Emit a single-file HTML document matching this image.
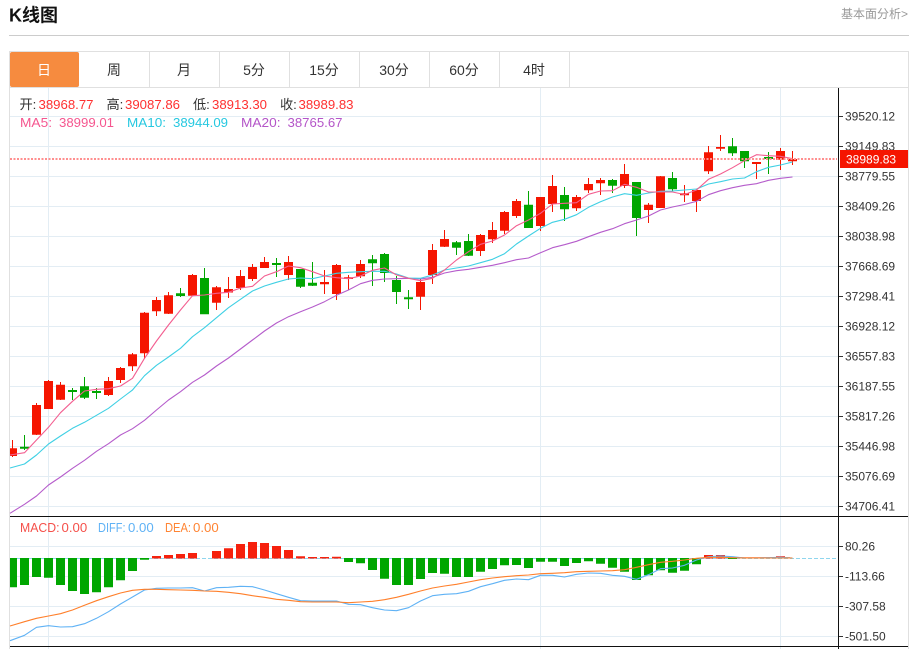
<!DOCTYPE html>
<html lang="zh">
<head>
<meta charset="utf-8">
<title>K线图</title>
<style>
html,body{margin:0;padding:0;background:#fff;width:917px;height:649px;overflow:hidden}
svg{display:block;position:absolute;left:0;top:0}
text{font-family:"Liberation Sans","Noto Sans CJK SC",sans-serif}
.ax{font-size:12px;fill:#333}
.tab{font-size:14px;fill:#333;text-anchor:middle}
.lg{font-size:13.2px}
</style>
</head>
<body>
<svg width="917" height="649" viewBox="0 0 917 649" xmlns="http://www.w3.org/2000/svg">
<!-- header -->
<text x="9" y="21.5" font-size="18" font-weight="700" fill="#111">K线图</text>
<text x="908" y="18" font-size="12" fill="#999" text-anchor="end">基本面分析&gt;</text>
<path d="M9 35.5H909" stroke="#ccc" fill="none"/>

<!-- frame -->
<path d="M9.5 52V649M908.5 52V649M9 51.5H909M9 87.5H909" stroke="#e0e0e0" fill="none"/>
<path d="M149.5 52V87M219.5 52V87M289.5 52V87M359.5 52V87M429.5 52V87M499.5 52V87M569.5 52V87" stroke="#e0e0e0" fill="none"/>
<rect x="10" y="52" width="69" height="35" rx="2" fill="#f68b3f"/>
<text class="tab" x="44" y="75" style="fill:#fff">日</text>
<text class="tab" x="114" y="75">周</text>
<text class="tab" x="184" y="75">月</text>
<text class="tab" x="254" y="75">5分</text>
<text class="tab" x="324" y="75">15分</text>
<text class="tab" x="394" y="75">30分</text>
<text class="tab" x="464" y="75">60分</text>
<text class="tab" x="534" y="75">4时</text>

<!-- grid -->
<path d="M10 116.5H838M10 146.5H838M10 176.5H838M10 206.5H838M10 236.5H838M10 266.5H838M10 296.5H838M10 326.5H838M10 356.5H838M10 386.5H838M10 416.5H838M10 446.5H838M10 476.5H838M10 506.5H838M10 546.5H838M10 576.5H838M10 606.5H838M10 636.5H838M48.5 88V649M540.5 88V649M780.5 88V649" stroke="#e3edf4" fill="none"/>

<!-- candles -->
<path fill="none" stroke="#f51500" d="M12.5 440V457M36.5 403V435M48.5 380V409M60.5 382V400M108.5 377V396M120.5 367V383M132.5 353V371M144.5 312V359M156.5 297V316M168.5 292V314M192.5 274V296M216.5 286V310M228.5 277V298M240.5 270V290M252.5 264V281M264.5 257V268M288.5 256V280M324.5 270V294M336.5 264V300M348.5 275V290M360.5 260V278M420.5 278V310M432.5 244V284M444.5 230V247M480.5 234V256M492.5 222V243M504.5 211V234M516.5 199V218M540.5 197V231M552.5 175V212M576.5 195V211M588.5 178V193M600.5 178V195M624.5 164V188M648.5 203V223M660.5 176V208M684.5 185V202M696.5 189V212M708.5 146V174M720.5 135V151M756.5 162V179M780.5 148V170M792.5 151V165"/>
<path fill="#f51500" d="M10 448.3h7V456h-7zM32 405h9v29.7h-9zM44 381h9v28h-9zM56 384.7h9v15h-9zM104 381h9v14h-9zM116 368h9v12h-9zM128 354.3h9v12h-9zM140 312.7h9v40.6h-9zM152 300h9v11.3h-9zM164 295.3h9v18.4h-9zM188 275h9v20.7h-9zM212 287.3h9v15.4h-9zM224 289h9v3.5h-9zM236 276h9v12h-9zM248 267h9v12h-9zM260 262h9v6h-9zM284 262h9v13h-9zM320 282h9v2.3h-9zM332 265h9v29h-9zM344 277.3h9v1.7h-9zM356 264h9v12.3h-9zM416 282h9v14.7h-9zM428 250h9v25h-9zM440 239h9v7.7h-9zM476 235h9v16h-9zM488 230h9v9.3h-9zM500 212h9v18.7h-9zM512 201h9v15h-9zM536 197h9v29h-9zM548 186h9v18h-9zM572 197h9v11.3h-9zM584 184h9v6.3h-9zM596 180h9v3.3h-9zM620 174h9v12h-9zM644 204.7h9v5.3h-9zM656 176.3h9V208h-9zM680 193.3h9v2h-9zM692 190h9v11h-9zM704 152.3h9v19h-9zM716 147h9v1.7h-9zM752 162h9v2h-9zM776 151h9v8.7h-9zM788 159h9v2.3h-9z"/>
<path fill="none" stroke="#00a600" d="M24.5 435V450M72.5 388V400M84.5 377V399M96.5 388V399M180.5 288V297M204.5 268V314M276.5 258V277M300.5 269V288M312.5 262V286M372.5 255V286M384.5 253V282M396.5 276V304M408.5 290V309M456.5 241V255M468.5 234V256M528.5 191V228M564.5 187V221M612.5 179V193M636.5 182V236M672.5 172V191M732.5 138V156M744.5 151V168M768.5 152V174"/>
<path fill="#00a600" d="M20 446.7h9v2h-9zM68 390h9v2h-9zM80 386.3h9v11.4h-9zM92 391h9v2h-9zM176 293.3h9v2.7h-9zM200 278h9v36.3h-9zM272 263h9v2h-9zM296 269h9v17.7h-9zM308 282.7h9v3h-9zM368 259.3h9v4h-9zM380 254h9v19h-9zM392 280h9v12h-9zM404 297.3h9v2h-9zM452 242.3h9v5.4h-9zM464 241h9v14.7h-9zM524 204.7h9V228h-9zM560 195h9v14.3h-9zM608 180h9v5.7h-9zM632 182h9v36h-9zM668 178h9v11.3h-9zM728 146.3h9v7h-9zM740 151h9v10.3h-9zM764 157h9v2h-9z"/>

<!-- moving averages -->
<g fill="none" stroke-width="1.1" stroke-linejoin="round">
<polyline stroke="#b55ccb" points="10,513.3 24.5,504.3 36.5,496 48.5,485 60.5,477 72.5,468.3 84.5,460.3 96.5,451.3 108.5,443.7 120.5,435 132.5,428.7 144.5,420.3 156.5,410 168.5,400 180.5,391.7 192.5,382.3 204.5,375 216.5,366 228.5,358 240.5,349 252.5,340 264.5,331 276.5,323 288.5,316.7 300.5,311.7 312.5,307 324.5,301.7 336.5,295.3 348.5,290 360.5,283.7 372.5,280.3 384.5,279 396.5,278.7 408.5,278.3 420.5,279 432.5,277.3 444.5,273 456.5,270.7 468.5,269.3 480.5,267.3 492.5,265.3 504.5,262.7 516.5,259.7 528.5,258 540.5,252.7 552.5,247.7 564.5,244.7 576.5,241.3 588.5,236.7 600.5,232.3 612.5,228.7 624.5,223.7 636.5,220 648.5,216 660.5,210 672.5,207 684.5,204.5 696.5,201.3 708.5,194.7 720.5,190.7 732.5,187.7 744.5,185.3 756.5,183.7 768.5,180.3 780.5,178.3 792.5,177"/>
<polyline stroke="#3fd0e4" points="10,468 24.5,464 36.5,455 48.5,444 60.5,436 72.5,428.3 84.5,422.3 96.5,415.3 108.5,408.3 120.5,399 132.5,390 144.5,375.7 156.5,365.3 168.5,357 180.5,348.3 192.5,336.7 204.5,327.7 216.5,317.7 228.5,307.7 240.5,299.3 252.5,291 264.5,286 276.5,282.3 288.5,279 300.5,278 312.5,278.7 324.5,276 336.5,273.3 348.5,272.3 360.5,271.7 372.5,271.3 384.5,271.3 396.5,274 408.5,278 420.5,278.3 432.5,275 444.5,270 456.5,268 468.5,266 480.5,262.7 492.5,259.3 504.5,253.7 516.5,244 528.5,236 540.5,228.3 552.5,222.3 564.5,219.3 576.5,214.7 588.5,207.3 600.5,201.7 612.5,197 624.5,193.7 636.5,195.3 648.5,193 660.5,191.3 672.5,191 684.5,190 696.5,189 708.5,184 720.5,181.7 732.5,179 744.5,178 756.5,171.7 768.5,167.3 780.5,165 792.5,162"/>
<polyline stroke="#f35e90" points="10,455 24.5,452.7 36.5,440 48.5,427.3 60.5,412.7 72.5,401.3 84.5,391 96.5,389.3 108.5,388.7 120.5,386 132.5,378.3 144.5,358.3 156.5,341 168.5,325 180.5,310 192.5,295.7 204.5,295 216.5,293.3 228.5,292.3 240.5,288 252.5,286.3 264.5,276 276.5,271.7 288.5,266 300.5,267.7 312.5,271.7 324.5,276 336.5,277.7 348.5,278.7 360.5,276 372.5,270.3 384.5,268 396.5,275 408.5,278.3 420.5,280.7 432.5,278.3 444.5,270 456.5,260 468.5,251.7 480.5,244.3 492.5,241 504.5,235 516.5,225.7 528.5,220 540.5,213.3 552.5,204 564.5,203.3 576.5,202.7 588.5,194.3 600.5,191 612.5,190.7 624.5,184.3 636.5,187.3 648.5,192 660.5,192 672.5,192 684.5,194.5 696.5,190 708.5,179.3 720.5,174 732.5,167.7 744.5,160.7 756.5,154.7 768.5,155.7 780.5,156.3 792.5,158.7"/>
</g>

<!-- current price line -->
<path d="M10 159H837" stroke="#ff8f8f" stroke-width="2" stroke-dasharray="2 1.5" fill="none"/>

<!-- macd zero line -->
<path d="M10 558.5H836" stroke="#8fd6ee" stroke-dasharray="4 2" fill="none"/>

<!-- macd bars -->
<path fill="#00a600" d="M10 558h7v29.3h-7zM20 558h9v27h-9zM32 558h9v19h-9zM44 558h9v19.7h-9zM56 558h9v27h-9zM68 558h9v33h-9zM80 558h9v36h-9zM92 558h9v34.3h-9zM104 558h9v29.3h-9zM116 558h9v22.3h-9zM128 558h9v13h-9zM140 558h9v1.8h-9zM344 558h9v4h-9zM356 558h9v5.3h-9zM368 558h9v12h-9zM380 558h9v20.7h-9zM392 558h9v27h-9zM404 558h9v27h-9zM416 558h9v21h-9zM428 558h9v15h-9zM440 558h9v15.7h-9zM452 558h9v19h-9zM464 558h9v19h-9zM476 558h9v13.7h-9zM488 558h9v11h-9zM500 558h9v7.3h-9zM512 558h9v7h-9zM524 558h9v10h-9zM536 558h9v3.7h-9zM548 558h9v3.7h-9zM560 558h9v8h-9zM572 558h9v5h-9zM584 558h9v3.3h-9zM596 558h9v5.7h-9zM608 558h9v9.7h-9zM620 558h9v13.7h-9zM632 558h9v22h-9zM644 558h9v17.3h-9zM656 558h9v12.3h-9zM668 558h9v14.7h-9zM680 558h9v12.7h-9zM692 558h9v6.3h-9zM728 558h9v1h-9z"/>
<path fill="#f51500" d="M152 556h9v2.5h-9zM164 555h9v3.5h-9zM176 554h9v4.5h-9zM188 553h9v5.5h-9zM212 551h9v7.5h-9zM224 548.3h9v10.2h-9zM236 544h9v14.5h-9zM248 542h9v16.5h-9zM260 543h9v15.5h-9zM272 546h9v12.5h-9zM284 550h9v8.5h-9zM296 556.3h9v2.2h-9zM308 557h9v1.5h-9zM320 557h9v1.5h-9zM332 556.7h9v1.8h-9zM704 555h9v3.5h-9zM716 555h9v3.5h-9zM776 556.3h9v2.2h-9z" fill-opacity=".95"/>
<path fill="#f28a60" d="M740 557h50v1.5h-50z" fill-opacity=".7"/>

<!-- macd lines -->
<g fill="none" stroke-width="1.1" stroke-linejoin="round">
<polyline stroke="#5fb2f5" points="10,640.7 24.5,635.3 36.5,627.3 48.5,625.7 60.5,627 72.5,626.7 84.5,623.7 96.5,618.3 108.5,611.7 120.5,604 132.5,597 144.5,590 156.5,588.3 168.5,588 180.5,588 192.5,587.7 204.5,591 216.5,587.7 228.5,587.3 240.5,586.3 252.5,586.7 264.5,590 276.5,593.7 288.5,597.3 300.5,600.7 312.5,601 324.5,601 336.5,601 348.5,604.3 360.5,604.7 372.5,607.7 384.5,610 396.5,610.7 408.5,607.7 420.5,601 432.5,595.7 444.5,594.3 456.5,593.7 468.5,591.3 480.5,586.7 492.5,583.7 504.5,580.3 516.5,579 528.5,579.7 540.5,575.3 552.5,575.3 564.5,577 576.5,574.3 588.5,573 600.5,573.3 612.5,575.3 624.5,576.3 636.5,579.3 648.5,574.7 660.5,568.7 672.5,568 684.5,565.3 696.5,560 708.5,556.7 720.5,556 732.5,556.7 744.5,558 756.5,558 768.5,557.7 780.5,557.3 792.5,558"/>
<polyline stroke="#ff7f2a" points="10,626 24.5,621.7 36.5,618.3 48.5,616 60.5,613.7 72.5,610 84.5,605.3 96.5,600.7 108.5,596.7 120.5,593 132.5,590.3 144.5,589.3 156.5,589.3 168.5,589.7 180.5,590 192.5,590.3 204.5,591 216.5,591.3 228.5,592.3 240.5,593.7 252.5,595.7 264.5,597.3 276.5,599.3 288.5,600.3 300.5,601.7 312.5,602 324.5,602 336.5,602 348.5,602.7 360.5,602 372.5,601.3 384.5,599.7 396.5,597.3 408.5,594.3 420.5,591 432.5,588 444.5,586 456.5,584.3 468.5,582 480.5,579.7 492.5,578 504.5,576.7 516.5,575.7 528.5,575 540.5,573.7 552.5,573.3 564.5,572.7 576.5,571.7 588.5,571.3 600.5,571 612.5,570.7 624.5,569.7 636.5,567.3 648.5,564.7 660.5,562.3 672.5,561.3 684.5,560 696.5,558.3 708.5,557.3 720.5,557.3 732.5,557.7 744.5,558 792.5,558"/>
</g>

<!-- axes -->
<path d="M10 516.5H908M10 646.5H908M838.5 88V649" stroke="#111" fill="none"/>
<path d="M839 116.5h4M839 146.5h4M839 176.5h4M839 206.5h4M839 236.5h4M839 266.5h4M839 296.5h4M839 326.5h4M839 356.5h4M839 386.5h4M839 416.5h4M839 446.5h4M839 476.5h4M839 506.5h4M839 546.5h4M839 576.5h4M839 606.5h4M839 636.5h4" stroke="#333" fill="none"/>
<text class="ax" x="845" y="120.5">39520.12</text>
<text class="ax" x="845" y="150.5">39149.83</text>
<text class="ax" x="845" y="180.5">38779.55</text>
<text class="ax" x="845" y="210.5">38409.26</text>
<text class="ax" x="845" y="240.5">38038.98</text>
<text class="ax" x="845" y="270.5">37668.69</text>
<text class="ax" x="845" y="300.5">37298.41</text>
<text class="ax" x="845" y="330.5">36928.12</text>
<text class="ax" x="845" y="360.5">36557.83</text>
<text class="ax" x="845" y="390.5">36187.55</text>
<text class="ax" x="845" y="420.5">35817.26</text>
<text class="ax" x="845" y="450.5">35446.98</text>
<text class="ax" x="845" y="480.5">35076.69</text>
<text class="ax" x="845" y="510.5">34706.41</text>
<text class="ax" x="845" y="550.5">80.26</text>
<text class="ax" x="845" y="580.5">-113.66</text>
<text class="ax" x="845" y="610.5">-307.58</text>
<text class="ax" x="845" y="640.5">-501.50</text>
<rect x="840" y="150" width="68" height="18" fill="#f51500"/>
<text x="846" y="163.5" font-size="12" fill="#fff">38989.83</text>

<!-- legend -->
<g class="lg">
<text x="19.5" y="109" fill="#333">开:</text><text x="38.5" y="109" fill="#ff3030">38968.77</text>
<text x="106.5" y="109" fill="#333">高:</text><text x="125" y="109" fill="#ff3030">39087.86</text>
<text x="193" y="109" fill="#333">低:</text><text x="212" y="109" fill="#ff3030">38913.30</text>
<text x="280" y="109" fill="#333">收:</text><text x="298.5" y="109" fill="#ff3030">38989.83</text>
<text x="20" y="127" fill="#f5568f" textLength="32" lengthAdjust="spacingAndGlyphs">MA5:</text><text x="59" y="127" fill="#f5568f">38999.01</text>
<text x="127" y="127" fill="#26c8e0" textLength="39" lengthAdjust="spacingAndGlyphs">MA10:</text><text x="173" y="127" fill="#26c8e0">38944.09</text>
<text x="241" y="127" fill="#b455c8" textLength="39.5" lengthAdjust="spacingAndGlyphs">MA20:</text><text x="287.5" y="127" fill="#b455c8">38765.67</text>
<text x="20" y="532" fill="#f5504a" textLength="39.5" lengthAdjust="spacingAndGlyphs">MACD:</text><text x="61.5" y="532" fill="#f5504a">0.00</text>
<text x="98" y="532" fill="#5fb2f5" textLength="27.5" lengthAdjust="spacingAndGlyphs">DIFF:</text><text x="128" y="532" fill="#5fb2f5">0.00</text>
<text x="165" y="532" fill="#ff8433" textLength="26" lengthAdjust="spacingAndGlyphs">DEA:</text><text x="193" y="532" fill="#ff8433">0.00</text>
</g>
</svg>
</body>
</html>
